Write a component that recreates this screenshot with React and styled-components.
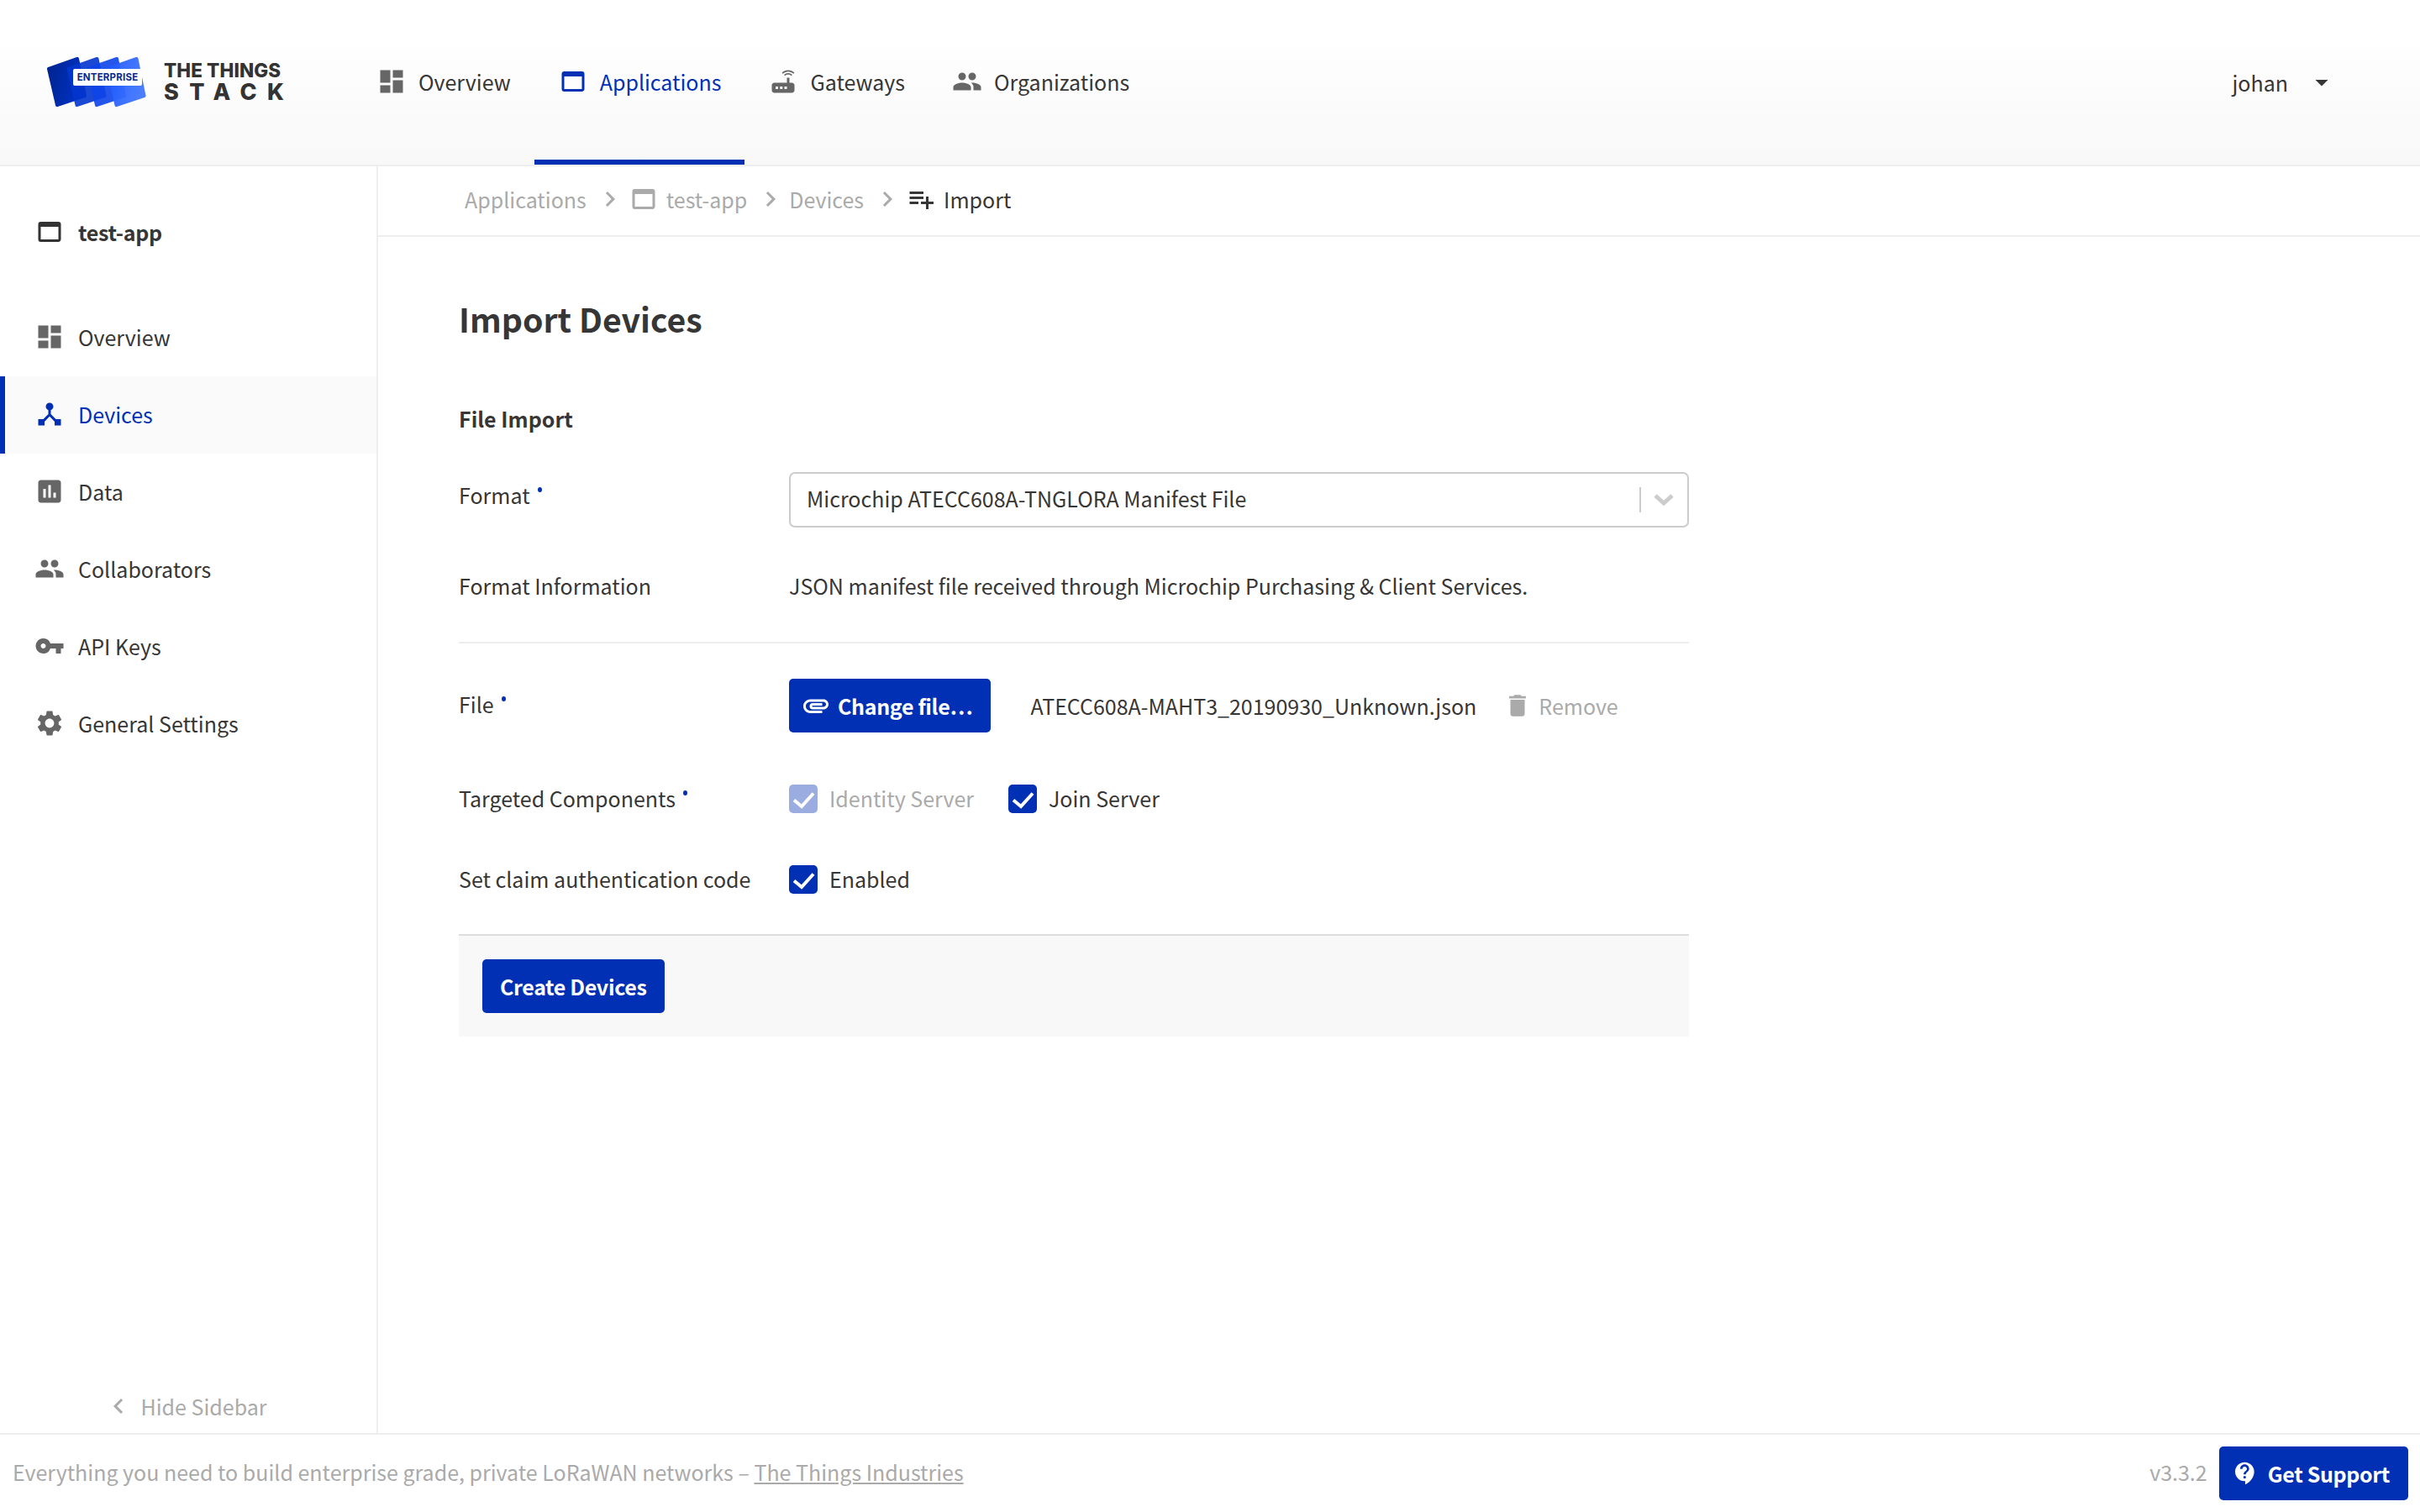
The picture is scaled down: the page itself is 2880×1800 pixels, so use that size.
import React from "react"
import styled, { createGlobalStyle } from "styled-components"
import {
  MdDashboard,
  MdWebAsset,
  MdRouter,
  MdPeople,
  MdDeviceHub,
  MdInsertChart,
  MdVpnKey,
  MdSettings,
  MdPlaylistAdd,
  MdAttachment,
  MdDelete,
  MdArrowDropDown,
  MdKeyboardArrowRight,
  MdKeyboardArrowLeft,
  MdContactSupport,
} from "react-icons/md"

const BLUE = "#0230b4"
const TEXT = "#363636"
const MUTED = "#aaaaaa"
const LINE = "#eeeeee"

const GlobalStyle = createGlobalStyle`
  html, body {
    margin: 0;
    padding: 0;
    background: #fff;
  }
  body {
    font-family: "Noto Sans CJK SC", "Noto Sans", sans-serif;
    font-size: 25px;
    line-height: 36px;
    color: ${TEXT};
  }
  * {
    box-sizing: border-box;
  }
`

const Page = styled.div`
  display: flex;
  flex-direction: column;
  width: 2880px;
  height: 1800px;
  overflow: hidden;
`

const Header = styled.header`
  display: flex;
  align-items: stretch;
  flex: none;
  height: 198px;
  border-bottom: 2px solid ${LINE};
  background: linear-gradient(#ffffff 20%, #f8f8f8);
`

const Logo = styled.div`
  display: flex;
  align-items: center;
  flex: none;
  gap: 21px;
  width: 420px;
  padding-left: 56px;
`

const LogoMark = styled.div`
  position: relative;
  flex: none;
  width: 118px;
  height: 60px;
`

const EnterpriseTag = styled.span`
  position: absolute;
  left: 31px;
  top: 14px;
  width: 82px;
  height: 20px;
  background: #fff;
  border-radius: 2px;
  color: #0a2a8c;
  font-family: Inter, sans-serif;
  font-size: 11.5px;
  font-weight: 700;
  line-height: 20px;
  text-align: center;
  letter-spacing: 0.2px;
`

const LogoWords = styled.div`
  display: flex;
  flex-direction: column;
  padding-bottom: 2px;
  font-family: Inter, sans-serif;
  font-weight: 800;
  color: #333;
`

const LogoTop = styled.span`
  font-size: 22.5px;
  line-height: 25px;
  letter-spacing: 0.1px;
  white-space: nowrap;
`

const LogoBottom = styled.span`
  font-size: 27px;
  line-height: 28px;
  letter-spacing: 12.4px;
  white-space: nowrap;
`

const Nav = styled.nav`
  display: flex;
  align-items: stretch;
`

const NavTab = styled.div`
  display: flex;
  align-items: center;
  gap: 14px;
  padding: 4px 28px 0;
  color: ${(p) => (p.$active ? BLUE : TEXT)};
  border-bottom: 6px solid ${(p) => (p.$active ? BLUE : "transparent")};
  svg {
    flex: none;
    font-size: 36px;
    color: ${(p) => (p.$active ? BLUE : "#666")};
  }
`

const UserMenu = styled.div`
  display: flex;
  align-items: center;
  margin-left: auto;
  padding-right: 99px;
  gap: 22px;
  svg {
    font-size: 36px;
  }
`

const Body = styled.div`
  display: flex;
  flex: 1;
  min-height: 0;
`

const Sidebar = styled.aside`
  display: flex;
  flex-direction: column;
  flex: none;
  width: 450px;
  border-right: 2px solid ${LINE};
`

const SideTitle = styled.div`
  display: flex;
  align-items: center;
  gap: 16px;
  height: 158px;
  padding-left: 41px;
  padding-bottom: 2px;
  font-weight: 600;
  letter-spacing: -0.3px;
  svg {
    font-size: 36px;
    color: #333;
  }
`

const SideItem = styled.div`
  display: flex;
  align-items: center;
  gap: 16px;
  height: 92px;
  padding-left: 41px;
  padding-bottom: 2px;
  color: ${(p) => (p.$active ? BLUE : TEXT)};
  background: ${(p) => (p.$active ? "#fafafa" : "transparent")};
  box-shadow: ${(p) => (p.$active ? `inset 6px 0 0 ${BLUE}` : "none")};
  svg {
    flex: none;
    font-size: 36px;
    color: ${(p) => (p.$active ? BLUE : "#666")};
  }
`

const HideSidebar = styled.div`
  display: flex;
  align-items: center;
  justify-content: center;
  gap: 9px;
  margin-top: auto;
  height: 62px;
  padding-bottom: 2px;
  color: ${MUTED};
  svg {
    font-size: 36px;
    margin-left: -8px;
  }
`

const Main = styled.main`
  flex: 1;
  min-width: 0;
`

const Breadcrumbs = styled.div`
  display: flex;
  align-items: center;
  height: 84px;
  padding-left: 103px;
  padding-bottom: 5px;
  border-bottom: 2px solid ${LINE};
  color: ${MUTED};
`

const Crumb = styled.span`
  display: flex;
  align-items: center;
  gap: 9px;
  color: ${(p) => (p.$current ? TEXT : MUTED)};
  svg {
    font-size: 36px;
  }
`

const CrumbSep = styled(MdKeyboardArrowRight)`
  flex: none;
  font-size: 36px;
  margin: 0 4px 0 10px;
  color: ${MUTED};
`

const Content = styled.div`
  width: 1560px;
  padding-left: 96px;
`

const Title = styled.h1`
  margin: 67px 0 0;
  font-size: 39.2px;
  line-height: 60px;
  font-weight: 700;
`

const SectionTitle = styled.h2`
  margin: 69px 0 0;
  font-size: 25px;
  line-height: 40px;
  font-weight: 700;
`

const Row = styled.div`
  display: grid;
  grid-template-columns: 393px 1fr;
  align-items: center;
  margin-top: ${(p) => p.$top}px;
`

const Label = styled.div`
  display: flex;
  margin-top: ${(p) => -(p.$lift || 0)}px;
  white-space: nowrap;
`

const Required = styled.i`
  flex: none;
  width: 5px;
  height: 6px;
  margin: 9px 0 0 9px;
  border-radius: 50%;
  background: ${BLUE};
`

const SelectBox = styled.div`
  display: flex;
  align-items: center;
  height: 66px;
  padding: 0 16px 0 19px;
  border: 2px solid #cccccc;
  border-radius: 7px;
`

const SelectValue = styled.span`
  flex: 1;
  padding-bottom: 4px;
`

const SelectSep = styled.span`
  width: 2px;
  height: 30px;
  margin-right: 15px;
  background: #cccccc;
`

const Divider = styled.div`
  height: 2px;
  margin-top: 49px;
  background: ${LINE};
`

const FileLine = styled.div`
  display: flex;
  align-items: center;
`

const Button = styled.div`
  display: inline-flex;
  align-items: center;
  gap: 8px;
  height: 64px;
  padding: 0 22px 0 ${(p) => (p.$plain ? 21 : 14)}px;
  border-radius: 5px;
  background: ${BLUE};
  color: #fff;
  font-weight: 600;
  letter-spacing: -0.35px;
  white-space: nowrap;
  svg {
    font-size: 36px;
  }
`

const SupportIcon = styled(MdContactSupport)`
  && {
    font-size: 32px;
    margin: 0 3px 0 1px;
  }
`

const FileName = styled.span`
  margin-left: 47px;
  white-space: nowrap;
`

const RemoveLink = styled.span`
  display: flex;
  align-items: center;
  gap: 8px;
  margin-left: 32px;
  color: ${MUTED};
  svg {
    font-size: 34px;
  }
`

const Checks = styled.div`
  display: flex;
  align-items: center;
  gap: 41px;
`

const Check = styled.span`
  display: flex;
  align-items: center;
  gap: 14px;
  height: 34px;
  color: ${(p) => (p.$disabled ? MUTED : TEXT)};
`

const CheckText = styled.span`
  padding-bottom: 3px;
`

const CheckBox = styled.span`
  display: flex;
  flex: none;
  width: 34px;
  height: 34px;
  border-radius: 5px;
  background: ${(p) => (p.$disabled ? "#9aace0" : BLUE)};
`

const SubmitBar = styled.div`
  margin-top: 48px;
  padding: 28px;
  border-top: 2px solid #dddddd;
  background: #f8f8f8;
`

const Footer = styled.footer`
  display: flex;
  align-items: center;
  flex: none;
  height: 94px;
  padding: 0 14px 0 15px;
  border-top: 2px solid ${LINE};
  color: ${MUTED};
`

const Tagline = styled.span`
  padding-bottom: 4px;
`

const FooterLink = styled.a`
  color: inherit;
  text-decoration: underline;
`

const Version = styled.span`
  margin-left: auto;
  margin-right: 14px;
  padding-bottom: 4px;
`

const Chevron = () => (
  <svg width="24" height="14" viewBox="0 0 24 14" fill="none" stroke="#cccccc" strokeWidth="5">
    <path d="M2 2 L12 11 L22 2" />
  </svg>
)

const Tick = () => (
  <svg width="34" height="34" viewBox="0 0 34 34" fill="none" stroke="#ffffff" strokeWidth="4">
    <path d="M6 18.5 L15 26 L29 10.5" />
  </svg>
)

const CARD = "M2 14 L36 2 L45 46 L12 57 Z"

const LogoCards = () => (
  <svg width="118" height="60" viewBox="0 0 118 60">
    <defs>
      <linearGradient id="logoA" x1="0" x2="1" y1="0" y2="0.3">
        <stop offset="0" stopColor="#00238f" />
        <stop offset="1" stopColor="#0033c4" />
      </linearGradient>
      <linearGradient id="logoD" x1="0" x2="1" y1="0" y2="0.3">
        <stop offset="0" stopColor="#1f58ff" />
        <stop offset="1" stopColor="#4076ff" />
      </linearGradient>
    </defs>
    <g strokeWidth="4" strokeLinejoin="round">
      <path d={CARD} fill="url(#logoA)" stroke="url(#logoA)" />
      <path d={CARD} transform="translate(23.5 0)" fill="#0436cf" stroke="#0436cf" opacity="0.9" />
      <path d={CARD} transform="translate(47 0)" fill="#0e45ea" stroke="#0e45ea" opacity="0.9" />
      <path d={CARD} transform="translate(70.5 0)" fill="url(#logoD)" stroke="url(#logoD)" opacity="0.95" />
    </g>
  </svg>
)

export default () => {
  return (
    <Page>
      <GlobalStyle />
      <Header>
        <Logo>
          <LogoMark>
            <LogoCards />
            <EnterpriseTag>ENTERPRISE</EnterpriseTag>
          </LogoMark>
          <LogoWords>
            <LogoTop>THE THINGS</LogoTop>
            <LogoBottom>STACK</LogoBottom>
          </LogoWords>
        </Logo>
        <Nav>
          <NavTab>
            <MdDashboard />
            Overview
          </NavTab>
          <NavTab $active>
            <MdWebAsset />
            Applications
          </NavTab>
          <NavTab>
            <MdRouter />
            Gateways
          </NavTab>
          <NavTab>
            <MdPeople />
            Organizations
          </NavTab>
        </Nav>
        <UserMenu>
          johan
          <MdArrowDropDown />
        </UserMenu>
      </Header>
      <Body>
        <Sidebar>
          <SideTitle>
            <MdWebAsset />
            test-app
          </SideTitle>
          <SideItem>
            <MdDashboard />
            Overview
          </SideItem>
          <SideItem $active>
            <MdDeviceHub />
            Devices
          </SideItem>
          <SideItem>
            <MdInsertChart />
            Data
          </SideItem>
          <SideItem>
            <MdPeople />
            Collaborators
          </SideItem>
          <SideItem>
            <MdVpnKey />
            API Keys
          </SideItem>
          <SideItem>
            <MdSettings />
            General Settings
          </SideItem>
          <HideSidebar>
            <MdKeyboardArrowLeft />
            Hide Sidebar
          </HideSidebar>
        </Sidebar>
        <Main>
          <Breadcrumbs>
            <Crumb>Applications</Crumb>
            <CrumbSep />
            <Crumb>
              <MdWebAsset />
              test-app
            </Crumb>
            <CrumbSep />
            <Crumb>Devices</Crumb>
            <CrumbSep />
            <Crumb $current>
              <MdPlaylistAdd />
              Import
            </Crumb>
          </Breadcrumbs>
          <Content>
            <Title>Import Devices</Title>
            <SectionTitle>File Import</SectionTitle>
            <Row $top={44}>
              <Label $lift={12}>
                Format
                <Required />
              </Label>
              <SelectBox>
                <SelectValue>Microchip ATECC608A-TNGLORA Manifest File</SelectValue>
                <SelectSep />
                <Chevron />
              </SelectBox>
            </Row>
            <Row $top={51}>
              <Label>Format Information</Label>
              <div>JSON manifest file received through Microchip Purchasing &amp; Client Services.</div>
            </Row>
            <Divider />
            <Row $top={42}>
              <Label $lift={4}>
                File
                <Required />
              </Label>
              <FileLine>
                <Button>
                  <MdAttachment />
                  Change file…
                </Button>
                <FileName>ATECC608A-MAHT3_20190930_Unknown.json</FileName>
                <RemoveLink>
                  <MdDelete />
                  Remove
                </RemoveLink>
              </FileLine>
            </Row>
            <Row $top={62}>
              <Label $lift={3}>
                Targeted Components
                <Required />
              </Label>
              <Checks>
                <Check $disabled>
                  <CheckBox $disabled>
                    <Tick />
                  </CheckBox>
                  <CheckText>Identity Server</CheckText>
                </Check>
                <Check>
                  <CheckBox>
                    <Tick />
                  </CheckBox>
                  <CheckText>Join Server</CheckText>
                </Check>
              </Checks>
            </Row>
            <Row $top={62}>
              <Label $lift={3}>Set claim authentication code</Label>
              <Check>
                <CheckBox>
                  <Tick />
                </CheckBox>
                <CheckText>Enabled</CheckText>
              </Check>
            </Row>
            <SubmitBar>
              <Button $plain>Create Devices</Button>
            </SubmitBar>
          </Content>
        </Main>
      </Body>
      <Footer>
        <Tagline>
          Everything you need to build enterprise grade, private LoRaWAN networks –{" "}
          <FooterLink>The Things Industries</FooterLink>
        </Tagline>
        <Version>v3.3.2</Version>
        <Button>
          <SupportIcon />
          Get Support
        </Button>
      </Footer>
    </Page>
  )
}
